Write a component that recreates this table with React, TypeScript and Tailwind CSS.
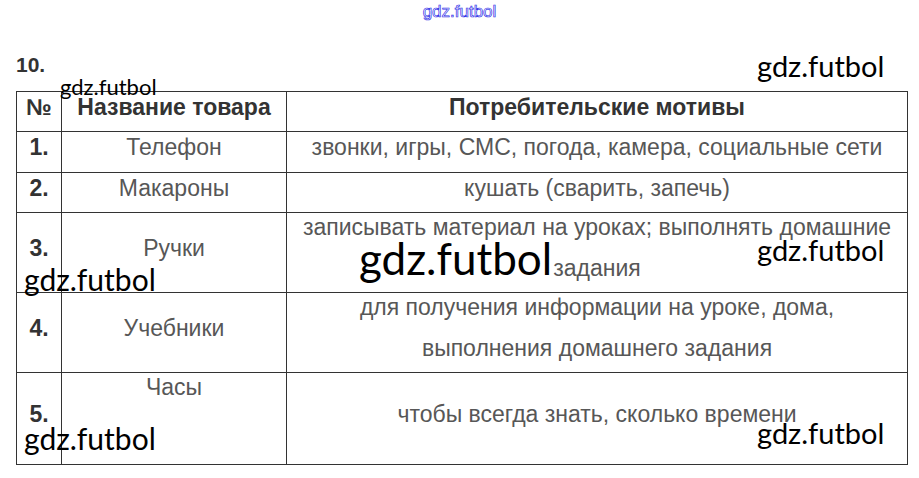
import React from "react";

const rows = [
  { n: "1.", name: "Телефон", motives: ["звонки, игры, СМС, погода, камера, социальные сети"], h: "h-[41px]" },
  { n: "2.", name: "Макароны", motives: ["кушать (сварить, запечь)"], h: "h-[40px]" },
  { n: "3.", name: "Ручки", motives: ["записывать материал на уроках; выполнять домашние", "задания"], h: "h-[80px]" },
  { n: "4.", name: "Учебники", motives: ["для получения информации на уроке, дома,", "выполнения домашнего задания"], h: "h-[80px]" },
];

// watermark overlay
function Mark({ className }: { className: string }) {
  return <span className={`absolute font-['Lato',sans-serif] text-black leading-none ${className}`}>gdz.futbol</span>;
}

const cell = "border border-[#333] text-center align-middle pb-[10px] leading-[28px]";

export default function App() {
  return (
    <div className="relative w-[919px] h-[478px] overflow-hidden bg-white font-['Liberation_Sans',Arial,sans-serif]">
      <div className="flex justify-center pt-[3px]">
        <span className="font-['Liberation_Sans',sans-serif] text-[17px] leading-none text-transparent [-webkit-text-stroke:0.7px_#3030e8]">gdz.futbol</span>
      </div>

      <div className="pl-[16px] pt-[34px] text-[21px] font-bold text-[#333] leading-none">10.</div>

      <table className="mt-[16px] ml-[16px] w-[892px] table-fixed border-collapse text-[23px] text-[#575757]">
        <colgroup>
          <col className="w-[45px]" />
          <col className="w-[225px]" />
          <col />
        </colgroup>
        <tbody>
          <tr className="h-[40px] font-bold text-[#333]">
            <td className={cell}>№</td>
            <td className={cell}>Название товара</td>
            <td className={cell}>Потребительские мотивы</td>
          </tr>
          {rows.map((r) => (
            <tr key={r.n} className={r.h}>
              <td className={`${cell} font-bold text-[#333]`}>{r.n}</td>
              <td className={cell}>{r.name}</td>
              <td className={cell}>
                <div className="flex flex-col gap-[13px]">
                  {r.motives.map((m) => (
                    <div key={m}>{m}</div>
                  ))}
                </div>
              </td>
            </tr>
          ))}
          <tr className="h-[92px]">
            <td className={`${cell} font-bold text-[#333]`}>5.</td>
            <td className="border border-[#333] text-center align-top leading-[28px]">Часы</td>
            <td className={cell}>чтобы всегда знать, сколько времени</td>
          </tr>
        </tbody>
      </table>

      <Mark className="left-[757px] top-[51px] text-[29px]" />
      <Mark className="left-[60px] top-[76px] text-[22px]" />
      <Mark className="left-[359px] top-[236px] text-[44px]" />
      <Mark className="left-[757px] top-[235px] text-[29px]" />
      <Mark className="left-[24px] top-[264px] text-[30px]" />
      <Mark className="left-[24px] top-[423px] text-[30px]" />
      <Mark className="left-[757px] top-[418px] text-[29px]" />
    </div>
  );
}
